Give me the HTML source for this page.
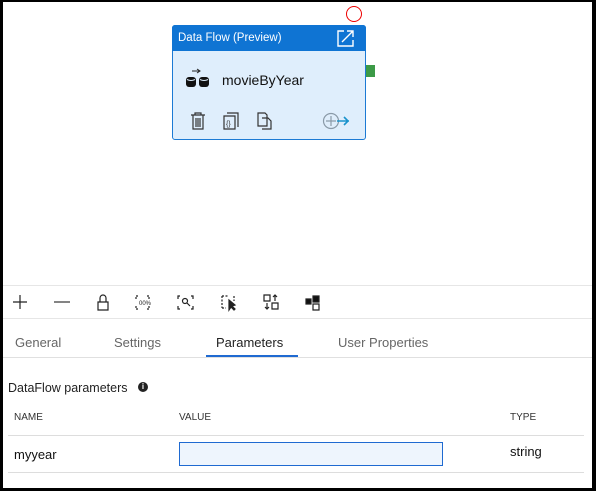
<!DOCTYPE html>
<html><head><style>
*{margin:0;padding:0;box-sizing:border-box}
body{width:596px;height:491px;background:#000;position:relative;font-family:"Liberation Sans",sans-serif;overflow:hidden}
#w{position:absolute;left:3px;top:2px;width:589px;height:486px;background:#fff}
.a{position:absolute}
</style></head><body>
<div id="w"></div>
<div class="a" style="left:346px;top:6px;width:16px;height:16px;border:1.3px solid #e00;border-radius:50%"></div>
<div class="a" style="left:172px;top:25px;width:194px;height:115px;background:#dfeefc;border:1px solid #1c7ad4;border-radius:3px"></div>
<div class="a" style="left:172px;top:25px;width:194px;height:26px;background:#0f74d3;border-radius:3px 3px 0 0"></div>
<div class="a" style="left:178px;top:32px;color:#fff;font-size:11.5px">Data Flow (Preview)</div>
<svg class="a" style="left:336px;top:29px" width="19" height="19" viewBox="0 0 19 19" fill="none" stroke="#fff" stroke-width="1.4"><path d="M8 2H2v15h15v-6"/><path d="M6 13L17 2M11 2h6v6"/></svg>
<div class="a" style="left:366px;top:65px;width:9px;height:12px;background:#3c9a47"></div>
<svg class="a" style="left:185px;top:68px" width="26" height="20" viewBox="0 0 26 20"><path d="M7 3h8M12 1l3 2-3 2" stroke="#222" fill="none" stroke-width="1"/><rect x="1" y="9" width="10" height="10" rx="3" fill="#111"/><rect x="14" y="9" width="10" height="10" rx="3" fill="#111"/><path d="M2 11.5q4 2 8 0M15 11.5q4 2 8 0" stroke="#dfeefc" fill="none" stroke-width="1"/></svg>
<div class="a" style="left:222px;top:72px;font-size:14px;color:#111">movieByYear</div>
<svg class="a" style="left:190px;top:112px" width="16" height="18" viewBox="0 0 16 18" fill="none" stroke="#333" stroke-width="1.2"><path d="M1 3h14M5 3V1h6v2M3 3v14h10V3M6 6v9M8 6v9M10 6v9"/></svg>
<svg class="a" style="left:223px;top:112px" width="16" height="18" viewBox="0 0 16 18" fill="none" stroke="#333" stroke-width="1.2"><path d="M4 1h11v14M1 4h11v13H1z"/><text x="3" y="14" font-size="7" fill="#333" stroke="none">{}</text></svg>
<svg class="a" style="left:257px;top:112px" width="16" height="18" viewBox="0 0 16 18" fill="none" stroke="#333" stroke-width="1.2"><path d="M1 1h7l2 2v11H1zM5 6h6l3 3v8H5"/></svg>
<svg class="a" style="left:322px;top:112px" width="28" height="18" viewBox="0 0 28 18" fill="none"><circle cx="9" cy="9" r="7.5" stroke="#8a9aa8" stroke-width="1.2"/><path d="M9 4v10M4 9h10" stroke="#8a9aa8" stroke-width="1.2"/><path d="M15 9h12M22 5l4 4-4 4" stroke="#1a93cc" stroke-width="1.6"/></svg>
<div class="a" style="left:3px;top:285px;width:589px;height:1px;background:#e6e6e6"></div>
<div class="a" style="left:3px;top:318px;width:589px;height:1px;background:#e6e6e6"></div>
<svg class="a" style="left:10px;top:292px" width="320" height="20" viewBox="0 0 320 20" fill="none" stroke="#222" stroke-width="1.2">
<path d="M10 3v14M3 10h14"/>
<path d="M44 10h16" stroke="#666" stroke-width="1.6"/>
<path d="M88 10h10v8H88zM90 10V6a3 3 0 0 1 6 0v4"/>
<path d="M128 4h-2v3M137 4h2v3M126 14v3h2M139 14v3h-2" stroke-dasharray="2 1"/>
<text x="129" y="13" font-size="6" fill="#222" stroke="none">00%</text>
<path d="M170 4h-2v3M181 4h2v3M168 14v3h2M183 14v3h-2"/><circle cx="175" cy="9" r="2.5"/><path d="M177 11l3 3"/>
<path d="M212 4h6M212 4v12M212 16h4M224 4v5" stroke-dasharray="2 1.5"/><path d="M219 8l0 10 2-3 3 3 1-1-3-3 3-1z" fill="#222"/>
<path d="M254 3h6v6h-6zM262 11h6v6h-6zM265 3v6M263 5l2-2 2 2M257 11v6M255 15l2 2 2-2"/>
<path d="M296 7h5v5h-5z" fill="#111"/><path d="M303 4h6v6h-6z" fill="#111"/><path d="M303 12h6v6h-6z"/>
</svg>
<div class="a" style="left:15px;top:335px;font-size:13px;color:#666">General</div>
<div class="a" style="left:114px;top:335px;font-size:13px;color:#666">Settings</div>
<div class="a" style="left:216px;top:335px;font-size:13px;color:#222">Parameters</div>
<div class="a" style="left:338px;top:335px;font-size:13px;color:#666">User Properties</div>
<div class="a" style="left:206px;top:355px;width:92px;height:2px;background:#1f6ad1"></div>
<div class="a" style="left:3px;top:357px;width:589px;height:1px;background:#e0e0e0"></div>
<div class="a" style="left:8px;top:381px;font-size:12.5px;color:#222">DataFlow parameters</div>
<div class="a" style="left:138px;top:382px;width:10px;height:10px;border-radius:50%;background:#222;color:#fff;font-size:8px;font-weight:bold;text-align:center;line-height:10px">i</div>
<div class="a" style="left:14px;top:412px;font-size:10px;color:#333">NAME</div>
<div class="a" style="left:179px;top:412px;font-size:10px;color:#333">VALUE</div>
<div class="a" style="left:510px;top:412px;font-size:10px;color:#333">TYPE</div>
<div class="a" style="left:8px;top:435px;width:576px;height:1px;background:#ddd"></div>
<div class="a" style="left:14px;top:447px;font-size:13px;color:#111">myyear</div>
<div class="a" style="left:179px;top:442px;width:264px;height:24px;background:#eef5fd;border:1px solid #1f6ad1"></div>
<div class="a" style="left:510px;top:444px;font-size:13px;color:#111">string</div>
<div class="a" style="left:8px;top:472px;width:576px;height:1px;background:#ddd"></div>
</body></html>
